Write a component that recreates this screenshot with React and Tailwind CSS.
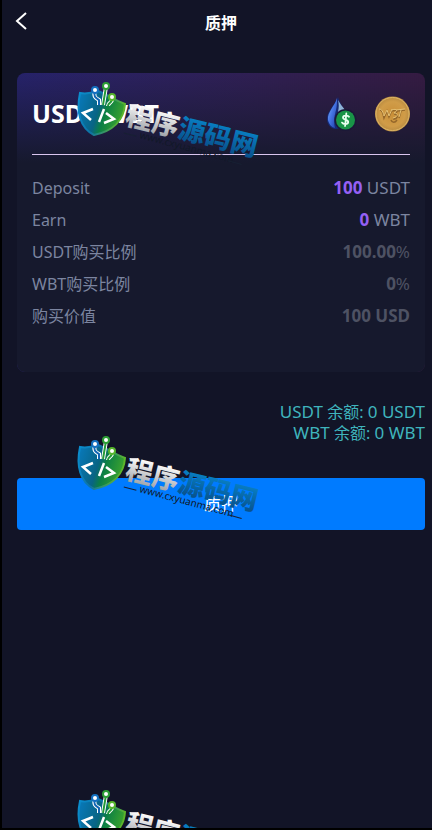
import React from "react";

const rows = [
  { label: "Deposit", value: "100", unit: " USDT", tone: "accent" },
  { label: "Earn", value: "0", unit: " WBT", tone: "accent" },
  { label: "USDT购买比例", value: "100.00", unit: "%", tone: "muted" },
  { label: "WBT购买比例", value: "0", unit: "%", tone: "muted" },
  { label: "购买价值", value: "100 USD", unit: "", tone: "muted" },
];

const balances = [
  { token: "USDT", amount: 0 },
  { token: "WBT", amount: 0 },
];

function UsdtIcon() {
  return (
    <svg viewBox="0 0 36 36" className="size-9" aria-label="USDT" role="img">
      <defs>
        <linearGradient id="drop" x1="0" y1="0" x2="1" y2="1">
          <stop offset="0" stopColor="#8fc0f5" />
          <stop offset="0.450" stopColor="#4878e6" />
          <stop offset="1" stopColor="#1b3aa5" />
        </linearGradient>
      </defs>
      <path d="M12 1C9 9 1 15 1 23c0 5 3 9 8 10 7 0 12-4 12-10C21 15 14 9 12 1z" fill="#152b78" />
      <path d="M11 2C9 10 1 16 2 24c1 4 3 7 7 8-2-9 0-13 1-18 1-4 1-8 1-12z" fill="url(#drop)" />
      <path d="M12 4c1 4 1 7 0 12 3-1 5-2 7-2-2-3-5-6-7-10z" fill="#8fb3d6" />
      <circle cx="19.500" cy="24" r="11" fill="#1b1938" />
      <circle cx="19.500" cy="24" r="9.500" fill="#199447" />
      <path d="M23 20.800c-1-1.800-6-1.700-6 .8 0 2.800 5.500 1.800 5.200 4.500-.3 2.600-5 2.400-6.200.5M20.300 17.500l-1.200 12.500" fill="none" stroke="#e9fff0" strokeWidth="1.800" strokeLinecap="round" />
    </svg>
  );
}

function WbtIcon() {
  return (
    <svg viewBox="0 0 36 36" className="size-9" aria-label="WBT" role="img">
      <defs>
        <radialGradient id="coin">
          <stop offset="0" stopColor="#c98f38" />
          <stop offset="0.700" stopColor="#d09c48" />
          <stop offset="1" stopColor="#b88a40" />
        </radialGradient>
      </defs>
      <circle cx="18.500" cy="18" r="17.500" fill="url(#coin)" />
      <circle cx="18.500" cy="18" r="16.500" fill="none" stroke="#dcb566" strokeWidth="1" />
      <path d="M6 14c2 0 3 3 4 8l3-7 2 6 3-7M18 15c6-2 6 2 2 3 5 0 4 5-1 5M23 15l8-1M27 15l-2 7M17 24c1 3 4 3 6 0" fill="none" stroke="#95672a" strokeWidth="1.500" />
      <path d="M5 13c3 0 4 3 5 7l3-6 2 6 3-7M18 14c5-2 6 1 2 3 5 0 4 4-1 5M22 14l9-1M27 14l-2 7" fill="none" stroke="#e6c274" strokeWidth="1" />
    </svg>
  );
}

function Watermark() {
  return (
    <svg viewBox="0 0 220 110" className="h-[110px] w-[220px] shrink-0" aria-hidden="true">
      <defs>
        <linearGradient id="shieldFill" x1="0" y1="0.200" x2="1" y2="0.500">
          <stop offset="0" stopColor="#0878b8" />
          <stop offset="0.450" stopColor="#086484" />
          <stop offset="0.600" stopColor="#0b7f45" />
          <stop offset="1" stopColor="#3fa52c" />
        </linearGradient>
        <linearGradient id="shieldEdge" x1="0" y1="0" x2="1" y2="0.300">
          <stop offset="0" stopColor="#0a8fd0" />
          <stop offset="0.500" stopColor="#0e72a4" />
          <stop offset="1" stopColor="#5cb52b" />
        </linearGradient>
        <linearGradient id="silver" x1="0" y1="0" x2="0" y2="1">
          <stop offset="0.200" stopColor="#ffffff" />
          <stop offset="1" stopColor="#8d9198" />
        </linearGradient>
        <linearGradient id="azure" x1="0" y1="0" x2="0" y2="1">
          <stop offset="0.200" stopColor="#087fc4" />
          <stop offset="1" stopColor="#084780" />
        </linearGradient>
      </defs>
      <path d="M12 12C18 13 24 12 30 10c10 4 16 9 27 13-1 16-12 27-31 31C12 47 8 31 12 12z" fill="url(#shieldFill)" stroke="url(#shieldEdge)" strokeWidth="2" />
      <path d="M27 10c-2 6 1 7 4 9v5M38 6l-3 18M44 17c1 5-4 4-4 8" fill="none" stroke="#ffffff" strokeWidth="4" />
      <path d="M27 10c-2 6 1 7 4 9v5" fill="none" stroke="#1166b4" strokeWidth="2" />
      <path d="M38 6l-3 18M44 17c1 5-4 4-4 8" fill="none" stroke="#239a38" strokeWidth="2" />
      <circle cx="27" cy="9" r="3" fill="#ffffff" stroke="#1470c0" strokeWidth="2" />
      <circle cx="38" cy="5" r="3" fill="#ffffff" stroke="#2c9d35" strokeWidth="2" />
      <circle cx="44" cy="16" r="3" fill="#ffffff" stroke="#55b52b" strokeWidth="2" />
      <path d="M25 28l-10 4 8 7M36 28l-5 13M38 32l8 6-10 4" fill="none" stroke="#ffffff" strokeWidth="2.500" />
      <g transform="translate(56 43) rotate(14)" className="font-['Noto_Sans_CJK_SC',sans-serif] text-[27px] font-black">
        <text x="0" y="0" fill="url(#silver)">程序</text>
        <text x="54" y="0" fill="url(#azure)">源码网</text>
      </g>
      <g transform="translate(71 57) rotate(15)">
        <text x="0" y="0" fill="#111827" className="font-['Noto_Sans',sans-serif] text-[10px]">www.cxyuanma.com</text>
        <path d="M-16-1h13M92-1h14" stroke="#172033" strokeWidth="1" />
      </g>
    </svg>
  );
}

export default function App() {
  return (
    <div className="relative min-h-screen overflow-hidden border-b-2 border-l-2 border-black bg-[#121427] pl-[15px] pr-[7px] font-['Noto_Sans','Noto_Sans_CJK_SC',sans-serif] text-base text-[#7c85a0]">
      <header className="grid h-[46px] grid-cols-3 items-center">
        <button type="button" aria-label="返回" className="-ml-1 size-6 text-white">
          <svg viewBox="0 0 24 24" className="size-6" fill="none" stroke="currentColor" strokeWidth="2">
            <path d="M13 2L4 10l9 8" />
          </svg>
        </button>
        <h1 className="text-center font-bold text-white">质押</h1>
      </header>

      <main className="pt-[27px]">
        <section className="rounded-lg bg-[#16192d] bg-linear-to-r from-[#26226a] to-[#351b42]">
          <div className="rounded-lg bg-linear-to-b from-transparent to-[#16192d] to-[90px] px-[15px] pb-10">
            <div className="flex h-[82px] items-center justify-between border-b border-[#d9c5ee]">
              <h2 className="text-[25px] font-bold text-white">USDT-WBT</h2>
              <div className="flex gap-3">
                <UsdtIcon />
                <WbtIcon />
              </div>
            </div>
            <dl className="pt-[17px]">
              {rows.map((row) => (
                <div key={row.label} className="flex h-8 items-center justify-between">
                  <dt>{row.label}</dt>
                  <dd className={row.tone === "accent" ? "text-[17px]" : "text-[17px] text-[#4e5263]"}>
                    <span className={row.tone === "accent" ? "font-bold text-[#9560f5]" : "font-bold"}>{row.value}</span>
                    {row.unit}
                  </dd>
                </div>
              ))}
            </dl>
          </div>
        </section>

        <div className="pt-[29px] text-right text-[17px] leading-[21px] text-[#3fb4bd]">
          {balances.map(({ token, amount }) => (
            <p key={token} className="h-[21px]">
              {token} <span className="text-base leading-[21px]">余额: </span>
              {amount} {token}
            </p>
          ))}
        </div>

        <button type="button" className="mt-[35px] h-[52px] w-full rounded bg-[#007bff] text-[17px] text-white">
          质押
        </button>
      </main>

      <div className="pointer-events-none absolute inset-y-0 left-[66px] flex flex-col gap-[244px] overflow-hidden pt-[81px]">
        <Watermark />
        <Watermark />
        <Watermark />
      </div>
    </div>
  );
}
